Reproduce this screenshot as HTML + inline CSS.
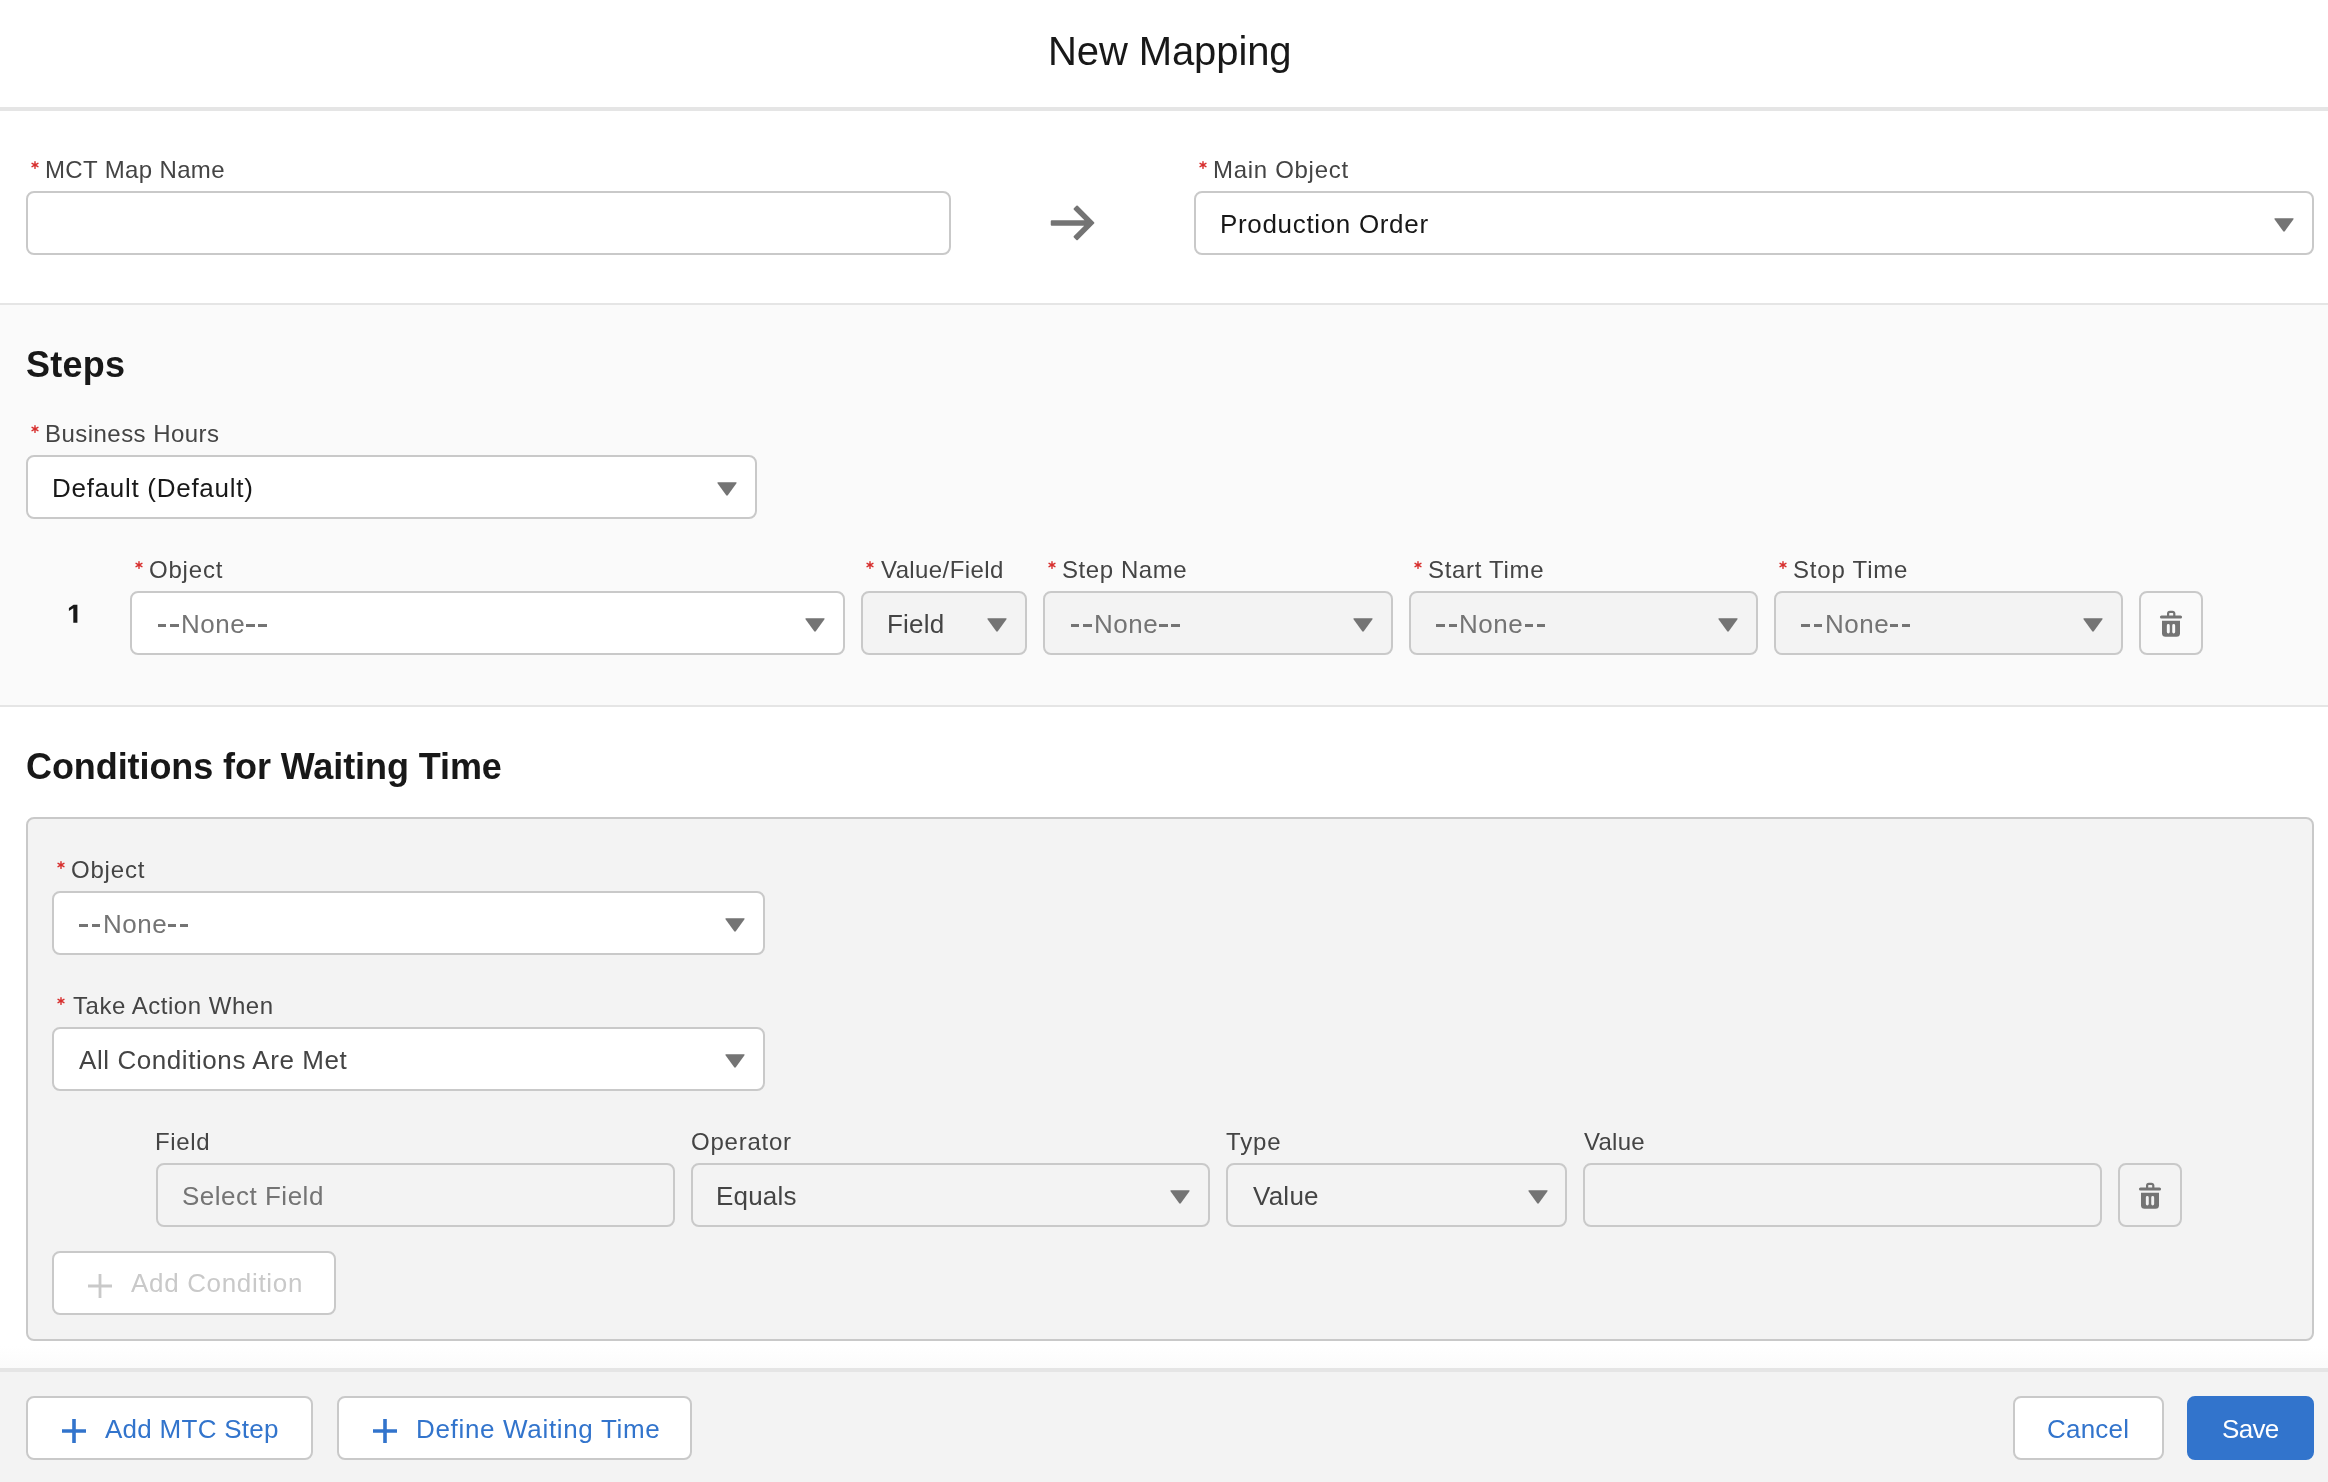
<!DOCTYPE html>
<html><head><meta charset="utf-8">
<title>New Mapping</title>
<style>
html,body{margin:0;padding:0;}
body{width:2328px;height:1482px;position:relative;overflow:hidden;background:#fff;font-family:"Liberation Sans",sans-serif;color:#181818;}
.a{position:absolute;box-sizing:border-box;}
.t{position:absolute;white-space:nowrap;line-height:1;-webkit-font-smoothing:antialiased;will-change:transform;}
</style></head>
<body>
<div class="a" style="left:0;top:107px;width:2328px;height:4px;background:#e5e5e5;"></div>
<div class="t" style="left:1048px;top:31px;font-size:40px;color:#181818;letter-spacing:-0.1px;">New Mapping</div>
<div class="a" style="left:0;top:303px;width:2328px;height:2px;background:#e5e5e5;"></div>
<svg class="a" style="left:29.2px;top:159.3px;" width="12" height="12" viewBox="-6 -6 12 12"><path d="M0 -3.4V3.4M-2.94 -1.7L2.94 1.7M-2.94 1.7L2.94 -1.7" stroke="#d72e2d" stroke-width="1.4" stroke-linecap="round"/></svg>
<div class="t" style="left:45px;top:158px;font-size:24px;color:#444;letter-spacing:0.36px;">MCT Map Name</div>
<div class="a" style="left:26px;top:191px;width:925px;height:64px;background:#fff;border:2px solid #c9c9c9;border-radius:8px;"></div>
<svg class="a" style="left:1040px;top:196px;" width="64" height="54" viewBox="0 0 64 54">
<path d="M11.75 25.15H46.68L34.57 13.04L37.05 10.56L53.39 26.9L37.05 43.24L34.57 40.76L46.68 28.65H11.75Z" fill="#747474" stroke="#747474" stroke-width="2" stroke-linejoin="round"/>
</svg>
<svg class="a" style="left:1197.2px;top:159.3px;" width="12" height="12" viewBox="-6 -6 12 12"><path d="M0 -3.4V3.4M-2.94 -1.7L2.94 1.7M-2.94 1.7L2.94 -1.7" stroke="#d72e2d" stroke-width="1.4" stroke-linecap="round"/></svg>
<div class="t" style="left:1213px;top:158px;font-size:24px;color:#444;letter-spacing:0.7px;">Main Object</div>
<div class="a" style="left:1194px;top:191px;width:1120px;height:64px;background:#fff;border:2px solid #c9c9c9;border-radius:8px;"></div>
<div class="t" style="left:1220px;top:211px;font-size:26px;color:#181818;letter-spacing:0.67px;">Production Order</div>
<svg class="a" style="left:2274px;top:218px;" width="20" height="14" viewBox="0 0 20 14"><path d="M1 0.3H19Q20.2 0.3 19.5 1.3L10.8 13.2Q10 14.1 9.2 13.2L0.5 1.3Q-0.2 0.3 1 0.3Z" fill="#747474"/></svg>
<div class="a" style="left:0;top:305px;width:2328px;height:400px;background:#fafafa;"></div>
<div class="a" style="left:0;top:705px;width:2328px;height:2px;background:#e5e5e5;"></div>
<div class="t" style="left:26px;top:347px;font-size:36px;color:#181818;letter-spacing:0.25px;font-weight:bold;">Steps</div>
<svg class="a" style="left:29.2px;top:423.3px;" width="12" height="12" viewBox="-6 -6 12 12"><path d="M0 -3.4V3.4M-2.94 -1.7L2.94 1.7M-2.94 1.7L2.94 -1.7" stroke="#d72e2d" stroke-width="1.4" stroke-linecap="round"/></svg>
<div class="t" style="left:44.5px;top:422px;font-size:24px;color:#444;letter-spacing:0.46px;">Business Hours</div>
<div class="a" style="left:26px;top:455px;width:731px;height:64px;background:#fff;border:2px solid #c9c9c9;border-radius:8px;"></div>
<div class="t" style="left:51.5px;top:475px;font-size:26px;color:#181818;letter-spacing:0.72px;">Default (Default)</div>
<svg class="a" style="left:717px;top:482px;" width="20" height="14" viewBox="0 0 20 14"><path d="M1 0.3H19Q20.2 0.3 19.5 1.3L10.8 13.2Q10 14.1 9.2 13.2L0.5 1.3Q-0.2 0.3 1 0.3Z" fill="#747474"/></svg>
<svg class="a" style="left:60px;top:600px;" width="24" height="30" viewBox="60 600 24 30"><path d="M68.9 608L73.6 604.7H77.4V622.8H73.3V608.2L68.9 611.1Z" fill="#181818"/></svg>
<svg class="a" style="left:133.2px;top:559.3px;" width="12" height="12" viewBox="-6 -6 12 12"><path d="M0 -3.4V3.4M-2.94 -1.7L2.94 1.7M-2.94 1.7L2.94 -1.7" stroke="#d72e2d" stroke-width="1.4" stroke-linecap="round"/></svg>
<div class="t" style="left:149px;top:558px;font-size:24px;color:#444;letter-spacing:0.8px;">Object</div>
<div class="a" style="left:130px;top:591px;width:715px;height:64px;background:#fff;border:2px solid #c9c9c9;border-radius:8px;"></div>
<div class="a" style="left:157.5px;top:624px;width:8.6px;height:2.5px;background:#747474;"></div>
<div class="a" style="left:170.0px;top:624px;width:8.6px;height:2.5px;background:#747474;"></div>
<div class="t" style="left:180.8px;top:611px;font-size:26px;color:#747474;letter-spacing:0.5px;">None</div>
<div class="a" style="left:246.0px;top:624px;width:8.6px;height:2.5px;background:#747474;"></div>
<div class="a" style="left:258.0px;top:624px;width:8.6px;height:2.5px;background:#747474;"></div>
<svg class="a" style="left:805px;top:618px;" width="20" height="14" viewBox="0 0 20 14"><path d="M1 0.3H19Q20.2 0.3 19.5 1.3L10.8 13.2Q10 14.1 9.2 13.2L0.5 1.3Q-0.2 0.3 1 0.3Z" fill="#747474"/></svg>
<svg class="a" style="left:864.2px;top:559.3px;" width="12" height="12" viewBox="-6 -6 12 12"><path d="M0 -3.4V3.4M-2.94 -1.7L2.94 1.7M-2.94 1.7L2.94 -1.7" stroke="#d72e2d" stroke-width="1.4" stroke-linecap="round"/></svg>
<div class="t" style="left:881px;top:558px;font-size:24px;color:#444;letter-spacing:0.4px;">Value/Field</div>
<div class="a" style="left:861px;top:591px;width:166px;height:64px;background:#f3f3f3;border:2px solid #c9c9c9;border-radius:8px;"></div>
<div class="t" style="left:887px;top:611px;font-size:26px;color:#444;letter-spacing:0.2px;">Field</div>
<svg class="a" style="left:987px;top:618px;" width="20" height="14" viewBox="0 0 20 14"><path d="M1 0.3H19Q20.2 0.3 19.5 1.3L10.8 13.2Q10 14.1 9.2 13.2L0.5 1.3Q-0.2 0.3 1 0.3Z" fill="#747474"/></svg>
<svg class="a" style="left:1046.2px;top:559.3px;" width="12" height="12" viewBox="-6 -6 12 12"><path d="M0 -3.4V3.4M-2.94 -1.7L2.94 1.7M-2.94 1.7L2.94 -1.7" stroke="#d72e2d" stroke-width="1.4" stroke-linecap="round"/></svg>
<div class="t" style="left:1062px;top:558px;font-size:24px;color:#444;letter-spacing:0.57px;">Step Name</div>
<div class="a" style="left:1043px;top:591px;width:350px;height:64px;background:#f3f3f3;border:2px solid #c9c9c9;border-radius:8px;"></div>
<div class="a" style="left:1070.6px;top:624px;width:8.6px;height:2.5px;background:#747474;"></div>
<div class="a" style="left:1083.1px;top:624px;width:8.6px;height:2.5px;background:#747474;"></div>
<div class="t" style="left:1093.9px;top:611px;font-size:26px;color:#747474;letter-spacing:0.5px;">None</div>
<div class="a" style="left:1159.1px;top:624px;width:8.6px;height:2.5px;background:#747474;"></div>
<div class="a" style="left:1171.1px;top:624px;width:8.6px;height:2.5px;background:#747474;"></div>
<svg class="a" style="left:1353px;top:618px;" width="20" height="14" viewBox="0 0 20 14"><path d="M1 0.3H19Q20.2 0.3 19.5 1.3L10.8 13.2Q10 14.1 9.2 13.2L0.5 1.3Q-0.2 0.3 1 0.3Z" fill="#747474"/></svg>
<svg class="a" style="left:1412.2px;top:559.3px;" width="12" height="12" viewBox="-6 -6 12 12"><path d="M0 -3.4V3.4M-2.94 -1.7L2.94 1.7M-2.94 1.7L2.94 -1.7" stroke="#d72e2d" stroke-width="1.4" stroke-linecap="round"/></svg>
<div class="t" style="left:1428px;top:558px;font-size:24px;color:#444;letter-spacing:0.7px;">Start Time</div>
<div class="a" style="left:1409px;top:591px;width:349px;height:64px;background:#f3f3f3;border:2px solid #c9c9c9;border-radius:8px;"></div>
<div class="a" style="left:1436px;top:624px;width:8.6px;height:2.5px;background:#747474;"></div>
<div class="a" style="left:1448.5px;top:624px;width:8.6px;height:2.5px;background:#747474;"></div>
<div class="t" style="left:1459.3px;top:611px;font-size:26px;color:#747474;letter-spacing:0.5px;">None</div>
<div class="a" style="left:1524.5px;top:624px;width:8.6px;height:2.5px;background:#747474;"></div>
<div class="a" style="left:1536.5px;top:624px;width:8.6px;height:2.5px;background:#747474;"></div>
<svg class="a" style="left:1718px;top:618px;" width="20" height="14" viewBox="0 0 20 14"><path d="M1 0.3H19Q20.2 0.3 19.5 1.3L10.8 13.2Q10 14.1 9.2 13.2L0.5 1.3Q-0.2 0.3 1 0.3Z" fill="#747474"/></svg>
<svg class="a" style="left:1777.2px;top:559.3px;" width="12" height="12" viewBox="-6 -6 12 12"><path d="M0 -3.4V3.4M-2.94 -1.7L2.94 1.7M-2.94 1.7L2.94 -1.7" stroke="#d72e2d" stroke-width="1.4" stroke-linecap="round"/></svg>
<div class="t" style="left:1793px;top:558px;font-size:24px;color:#444;letter-spacing:0.8px;">Stop Time</div>
<div class="a" style="left:1774px;top:591px;width:349px;height:64px;background:#f3f3f3;border:2px solid #c9c9c9;border-radius:8px;"></div>
<div class="a" style="left:1801.2px;top:624px;width:8.6px;height:2.5px;background:#747474;"></div>
<div class="a" style="left:1813.7px;top:624px;width:8.6px;height:2.5px;background:#747474;"></div>
<div class="t" style="left:1824.5px;top:611px;font-size:26px;color:#747474;letter-spacing:0.5px;">None</div>
<div class="a" style="left:1889.7px;top:624px;width:8.6px;height:2.5px;background:#747474;"></div>
<div class="a" style="left:1901.7px;top:624px;width:8.6px;height:2.5px;background:#747474;"></div>
<svg class="a" style="left:2083px;top:618px;" width="20" height="14" viewBox="0 0 20 14"><path d="M1 0.3H19Q20.2 0.3 19.5 1.3L10.8 13.2Q10 14.1 9.2 13.2L0.5 1.3Q-0.2 0.3 1 0.3Z" fill="#747474"/></svg>
<div class="a" style="left:2139px;top:591px;width:64px;height:64px;border:2px solid #c9c9c9;border-radius:8px;"></div>
<svg class="a" style="left:2140px;top:592px;" width="64" height="64" viewBox="0 0 64 64">
<path d="M21.5 25H40.5" stroke="#747474" stroke-width="3.1" stroke-linecap="round"/>
<path d="M28.1 24V21.6a1.8 1.8 0 0 1 1.8-1.8h2.6a1.8 1.8 0 0 1 1.8 1.8V24" fill="none" stroke="#747474" stroke-width="2.2"/>
<path d="M22 28.7H40V41.2a3.5 3.5 0 0 1-3.5 3.5H25.5a3.5 3.5 0 0 1-3.5-3.5Z" fill="#747474"/>
<path d="M28.3 33.5V40M33.7 33.5V40" stroke="#fafafa" stroke-width="2.9" stroke-linecap="round"/>
</svg>
<div class="t" style="left:25.5px;top:749px;font-size:36px;color:#181818;letter-spacing:-0.08px;font-weight:bold;">Conditions for Waiting Time</div>
<div class="a" style="left:26px;top:817px;width:2288px;height:524px;background:#f3f3f3;border:2px solid #c9c9c9;border-radius:8px;"></div>
<svg class="a" style="left:55.2px;top:859.3px;" width="12" height="12" viewBox="-6 -6 12 12"><path d="M0 -3.4V3.4M-2.94 -1.7L2.94 1.7M-2.94 1.7L2.94 -1.7" stroke="#d72e2d" stroke-width="1.4" stroke-linecap="round"/></svg>
<div class="t" style="left:71px;top:858px;font-size:24px;color:#444;letter-spacing:0.8px;">Object</div>
<div class="a" style="left:52px;top:891px;width:713px;height:64px;background:#fff;border:2px solid #c9c9c9;border-radius:8px;"></div>
<div class="a" style="left:79.4px;top:924px;width:8.6px;height:2.5px;background:#747474;"></div>
<div class="a" style="left:91.9px;top:924px;width:8.6px;height:2.5px;background:#747474;"></div>
<div class="t" style="left:102.7px;top:911px;font-size:26px;color:#747474;letter-spacing:0.5px;">None</div>
<div class="a" style="left:167.9px;top:924px;width:8.6px;height:2.5px;background:#747474;"></div>
<div class="a" style="left:179.9px;top:924px;width:8.6px;height:2.5px;background:#747474;"></div>
<svg class="a" style="left:725px;top:918px;" width="20" height="14" viewBox="0 0 20 14"><path d="M1 0.3H19Q20.2 0.3 19.5 1.3L10.8 13.2Q10 14.1 9.2 13.2L0.5 1.3Q-0.2 0.3 1 0.3Z" fill="#747474"/></svg>
<svg class="a" style="left:55.2px;top:995.3px;" width="12" height="12" viewBox="-6 -6 12 12"><path d="M0 -3.4V3.4M-2.94 -1.7L2.94 1.7M-2.94 1.7L2.94 -1.7" stroke="#d72e2d" stroke-width="1.4" stroke-linecap="round"/></svg>
<div class="t" style="left:73px;top:994px;font-size:24px;color:#444;letter-spacing:0.53px;">Take Action When</div>
<div class="a" style="left:52px;top:1027px;width:713px;height:64px;background:#fff;border:2px solid #c9c9c9;border-radius:8px;"></div>
<div class="t" style="left:79px;top:1047px;font-size:26px;color:#444;letter-spacing:0.57px;">All Conditions Are Met</div>
<svg class="a" style="left:725px;top:1054px;" width="20" height="14" viewBox="0 0 20 14"><path d="M1 0.3H19Q20.2 0.3 19.5 1.3L10.8 13.2Q10 14.1 9.2 13.2L0.5 1.3Q-0.2 0.3 1 0.3Z" fill="#747474"/></svg>
<div class="t" style="left:155px;top:1130px;font-size:24px;color:#444;letter-spacing:0.65px;">Field</div>
<div class="a" style="left:156px;top:1163px;width:519px;height:64px;background:#f3f3f3;border:2px solid #c9c9c9;border-radius:8px;"></div>
<div class="t" style="left:182px;top:1183px;font-size:26px;color:#747474;letter-spacing:0.5px;">Select Field</div>
<div class="t" style="left:691px;top:1130px;font-size:24px;color:#444;letter-spacing:0.77px;">Operator</div>
<div class="a" style="left:691px;top:1163px;width:519px;height:64px;background:#f3f3f3;border:2px solid #c9c9c9;border-radius:8px;"></div>
<div class="t" style="left:716px;top:1183px;font-size:26px;color:#444;letter-spacing:0.2px;">Equals</div>
<svg class="a" style="left:1170px;top:1190px;" width="20" height="14" viewBox="0 0 20 14"><path d="M1 0.3H19Q20.2 0.3 19.5 1.3L10.8 13.2Q10 14.1 9.2 13.2L0.5 1.3Q-0.2 0.3 1 0.3Z" fill="#747474"/></svg>
<div class="t" style="left:1226px;top:1130px;font-size:24px;color:#444;letter-spacing:0.87px;">Type</div>
<div class="a" style="left:1226px;top:1163px;width:341px;height:64px;background:#f3f3f3;border:2px solid #c9c9c9;border-radius:8px;"></div>
<div class="t" style="left:1253px;top:1183px;font-size:26px;color:#444;letter-spacing:0.25px;">Value</div>
<svg class="a" style="left:1527.5px;top:1190px;" width="20" height="14" viewBox="0 0 20 14"><path d="M1 0.3H19Q20.2 0.3 19.5 1.3L10.8 13.2Q10 14.1 9.2 13.2L0.5 1.3Q-0.2 0.3 1 0.3Z" fill="#747474"/></svg>
<div class="t" style="left:1583.5px;top:1130px;font-size:24px;color:#444;letter-spacing:0.25px;">Value</div>
<div class="a" style="left:1583px;top:1163px;width:519px;height:64px;background:#f3f3f3;border:2px solid #c9c9c9;border-radius:8px;"></div>
<div class="a" style="left:2118px;top:1163px;width:64px;height:64px;border:2px solid #c9c9c9;border-radius:8px;"></div>
<svg class="a" style="left:2119px;top:1164px;" width="64" height="64" viewBox="0 0 64 64">
<path d="M21.5 25H40.5" stroke="#747474" stroke-width="3.1" stroke-linecap="round"/>
<path d="M28.1 24V21.6a1.8 1.8 0 0 1 1.8-1.8h2.6a1.8 1.8 0 0 1 1.8 1.8V24" fill="none" stroke="#747474" stroke-width="2.2"/>
<path d="M22 28.7H40V41.2a3.5 3.5 0 0 1-3.5 3.5H25.5a3.5 3.5 0 0 1-3.5-3.5Z" fill="#747474"/>
<path d="M28.3 33.5V40M33.7 33.5V40" stroke="#f3f3f3" stroke-width="2.9" stroke-linecap="round"/>
</svg>
<div class="a" style="left:52px;top:1251px;width:284px;height:64px;background:#fff;border:2px solid #c9c9c9;border-radius:8px;"></div>
<svg class="a" style="left:88.0px;top:1274.0px;" width="24" height="24" viewBox="0 0 24 24"><path d="M12.0 0V24M0 12.0H24" stroke="#c9c9c9" stroke-width="2.8"/></svg>
<div class="t" style="left:131px;top:1270px;font-size:26px;color:#c9c9c9;letter-spacing:0.67px;">Add Condition</div>
<div class="a" style="left:0;top:1346px;width:2328px;height:22px;background:linear-gradient(#fff,#fbfbfb);"></div>
<div class="a" style="left:0;top:1368px;width:2328px;height:114px;background:#f3f3f3;border-top:4px solid #e5e5e5;"></div>
<div class="a" style="left:26px;top:1396px;width:287px;height:64px;background:#fff;border:2px solid #c9c9c9;border-radius:8px;"></div>
<svg class="a" style="left:62.0px;top:1419.0px;" width="24" height="24" viewBox="0 0 24 24"><path d="M12.0 0V24M0 12.0H24" stroke="#3274cc" stroke-width="3.6"/></svg>
<div class="t" style="left:105px;top:1416px;font-size:26px;color:#3274cc;letter-spacing:0.27px;">Add MTC Step</div>
<div class="a" style="left:337px;top:1396px;width:355px;height:64px;background:#fff;border:2px solid #c9c9c9;border-radius:8px;"></div>
<svg class="a" style="left:373.0px;top:1419.0px;" width="24" height="24" viewBox="0 0 24 24"><path d="M12.0 0V24M0 12.0H24" stroke="#3274cc" stroke-width="3.6"/></svg>
<div class="t" style="left:416px;top:1416px;font-size:26px;color:#3274cc;letter-spacing:0.67px;">Define Waiting Time</div>
<div class="a" style="left:2013px;top:1396px;width:151px;height:64px;background:#fff;border:2px solid #c9c9c9;border-radius:8px;"></div>
<div class="t" style="left:2047px;top:1416px;font-size:26px;color:#3274cc;letter-spacing:0.2px;">Cancel</div>
<div class="a" style="left:2187px;top:1396px;width:127px;height:64px;background:#3274cc;border:2px solid #3274cc;border-radius:8px;"></div>
<div class="t" style="left:2222px;top:1416px;font-size:26px;color:#fff;letter-spacing:-0.67px;">Save</div>
</body></html>
